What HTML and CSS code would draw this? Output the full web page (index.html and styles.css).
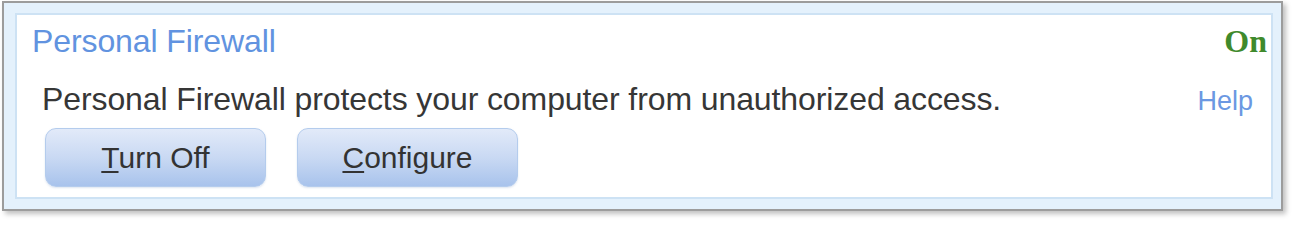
FILE: index.html
```html
<!DOCTYPE html>
<html>
<head>
<meta charset="utf-8">
<link rel="stylesheet" href="styles.css">
</head>
<body>
<div class="frame">
  <div class="panel">
    <div class="head">
      <span class="title">Personal Firewall</span>
      <span class="status">On</span>
    </div>
    <div class="desc-row">
      <span class="desc">Personal Firewall protects your computer from unauthorized access.</span>
      <span class="help">Help</span>
    </div>
    <div class="actions">
      <button class="btn"><u>T</u>urn Off</button>
      <button class="btn"><u>C</u>onfigure</button>
    </div>
  </div>
</div>
</body>
</html>
```
FILE: styles.css
```css
html, body {
  margin: 0;
  padding: 0;
  background: #ffffff;
}
body {
  width: 1314px;
  height: 246px;
  overflow: hidden;
  font-family: "Liberation Sans", Arial, sans-serif;
}
.frame {
  margin: 1px 0 0 2px;
  box-sizing: border-box;
  width: 1281px;
  border: 2px solid #9c9c9c;
  background: #e4f1fc;
  padding: 10px 8px 10px 11px;
  box-shadow: 3px 3px 5px rgba(0, 0, 0, 0.25);
}
.panel {
  background: #ffffff;
  border: 2px solid #cde2f4;
  height: 174px;
  padding: 8px 4px 0 15px;
  box-sizing: content-box;
}
.head {
  display: flex;
  justify-content: space-between;
  align-items: baseline;
  height: 36px;
  line-height: 36px;
}
.title {
  font-size: 32px;
  color: #6193e0;
  letter-spacing: -0.1px;
}
.status {
  font-family: "Liberation Serif", "Times New Roman", serif;
  font-weight: bold;
  font-size: 32px;
  color: #3f8a2c;
}
.desc-row {
  display: flex;
  justify-content: space-between;
  align-items: baseline;
  margin-top: 22px;
  padding-left: 10px;
  padding-right: 14px;
  height: 36px;
  line-height: 36px;
}
.desc {
  font-size: 32px;
  color: #363636;
  letter-spacing: -0.1px;
}
.help {
  font-size: 27px;
  color: #6b98e2;
}
.actions {
  display: flex;
  gap: 31px;
  margin-top: 11px;
  padding-left: 13px;
}
.btn {
  width: 221px;
  height: 59px;
  border: 1px solid #b4cced;
  border-radius: 11px;
  background: linear-gradient(to bottom, #e2eaf9 0%, #c9d9f3 50%, #a8c3ec 100%);
  font-family: "Liberation Sans", Arial, sans-serif;
  font-size: 30px;
  color: #333333;
  padding: 0;
  box-shadow: 0 1px 2px rgba(120, 150, 200, 0.25);
}
.btn u {
  text-decoration-thickness: 2px;
  text-underline-offset: 3px;
}
```
